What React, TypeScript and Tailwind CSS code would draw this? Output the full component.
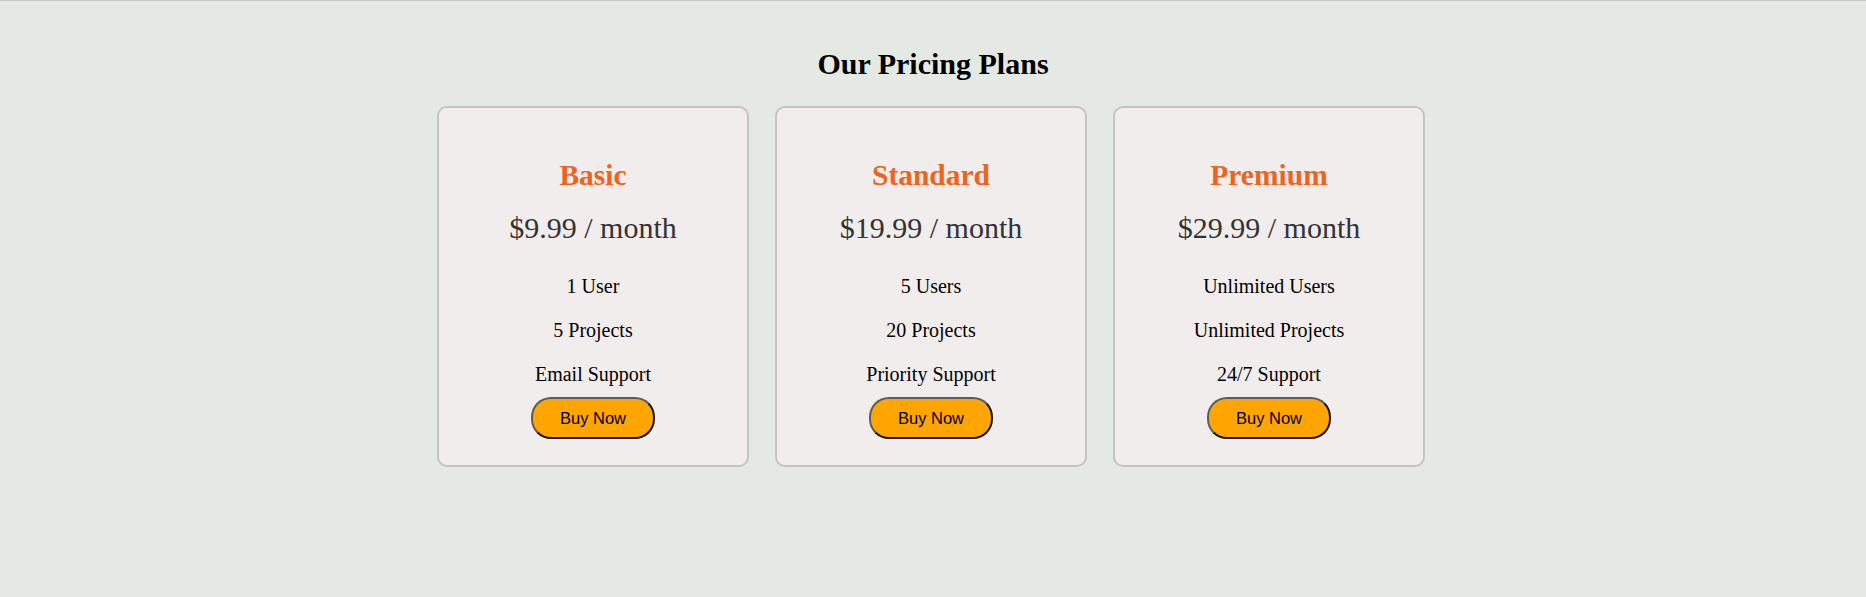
const plans = [
  {
    name: 'Basic',
    price: '$9.99 / month',
    features: ['1 User', '5 Projects', 'Email Support'],
  },
  {
    name: 'Standard',
    price: '$19.99 / month',
    features: ['5 Users', '20 Projects', 'Priority Support'],
  },
  {
    name: 'Premium',
    price: '$29.99 / month',
    features: ['Unlimited Users', 'Unlimited Projects', '24/7 Support'],
  },
]

function PlanCard({ plan }: { plan: (typeof plans)[number] }) {
  return (
    <div className="flex w-[312px] flex-col items-center rounded-[10px] border-2 border-[#c4c4c2] bg-[#f2eded] pt-[50px] pb-[26px]">
      <h3 className="text-[29.5px] font-bold leading-[34px] text-[#f0631d]">
        {plan.name}
      </h3>
      <p className="mt-[17px] text-[30px] leading-[37px] text-[#333333]">
        {plan.price}
      </p>
      <ul className="mt-[29px] flex flex-col items-center gap-[22px]">
        {plan.features.map((f) => (
          <li key={f} className="text-[20px] leading-[22px] text-black">
            {f}
          </li>
        ))}
      </ul>
      <button className="mt-[11.5px] rounded-[20px] border-2 border-t-[#5c5c5c] border-l-[#5c5c5c] border-r-[#141414] border-b-[#141414] bg-[#ffa500] px-[27px] py-[10px] font-['Liberation_Sans',Arial,sans-serif] text-[16.5px] leading-[18px] text-black">
        Buy Now
      </button>
    </div>
  )
}

export default function App() {
  return (
    <div className="min-h-[597px] w-full border-t border-[#c6cac5] bg-[#e5e9e3] pt-[45px] font-['Liberation_Serif','Times_New_Roman',serif]">
      <h2 className="text-center text-[30px] font-bold leading-[35px] text-black">
        Our Pricing Plans
      </h2>
      <div className="mt-[25px] flex justify-center gap-[26px] pr-[4px]">
        {plans.map((p) => (
          <PlanCard key={p.name} plan={p} />
        ))}
      </div>
    </div>
  )
}
